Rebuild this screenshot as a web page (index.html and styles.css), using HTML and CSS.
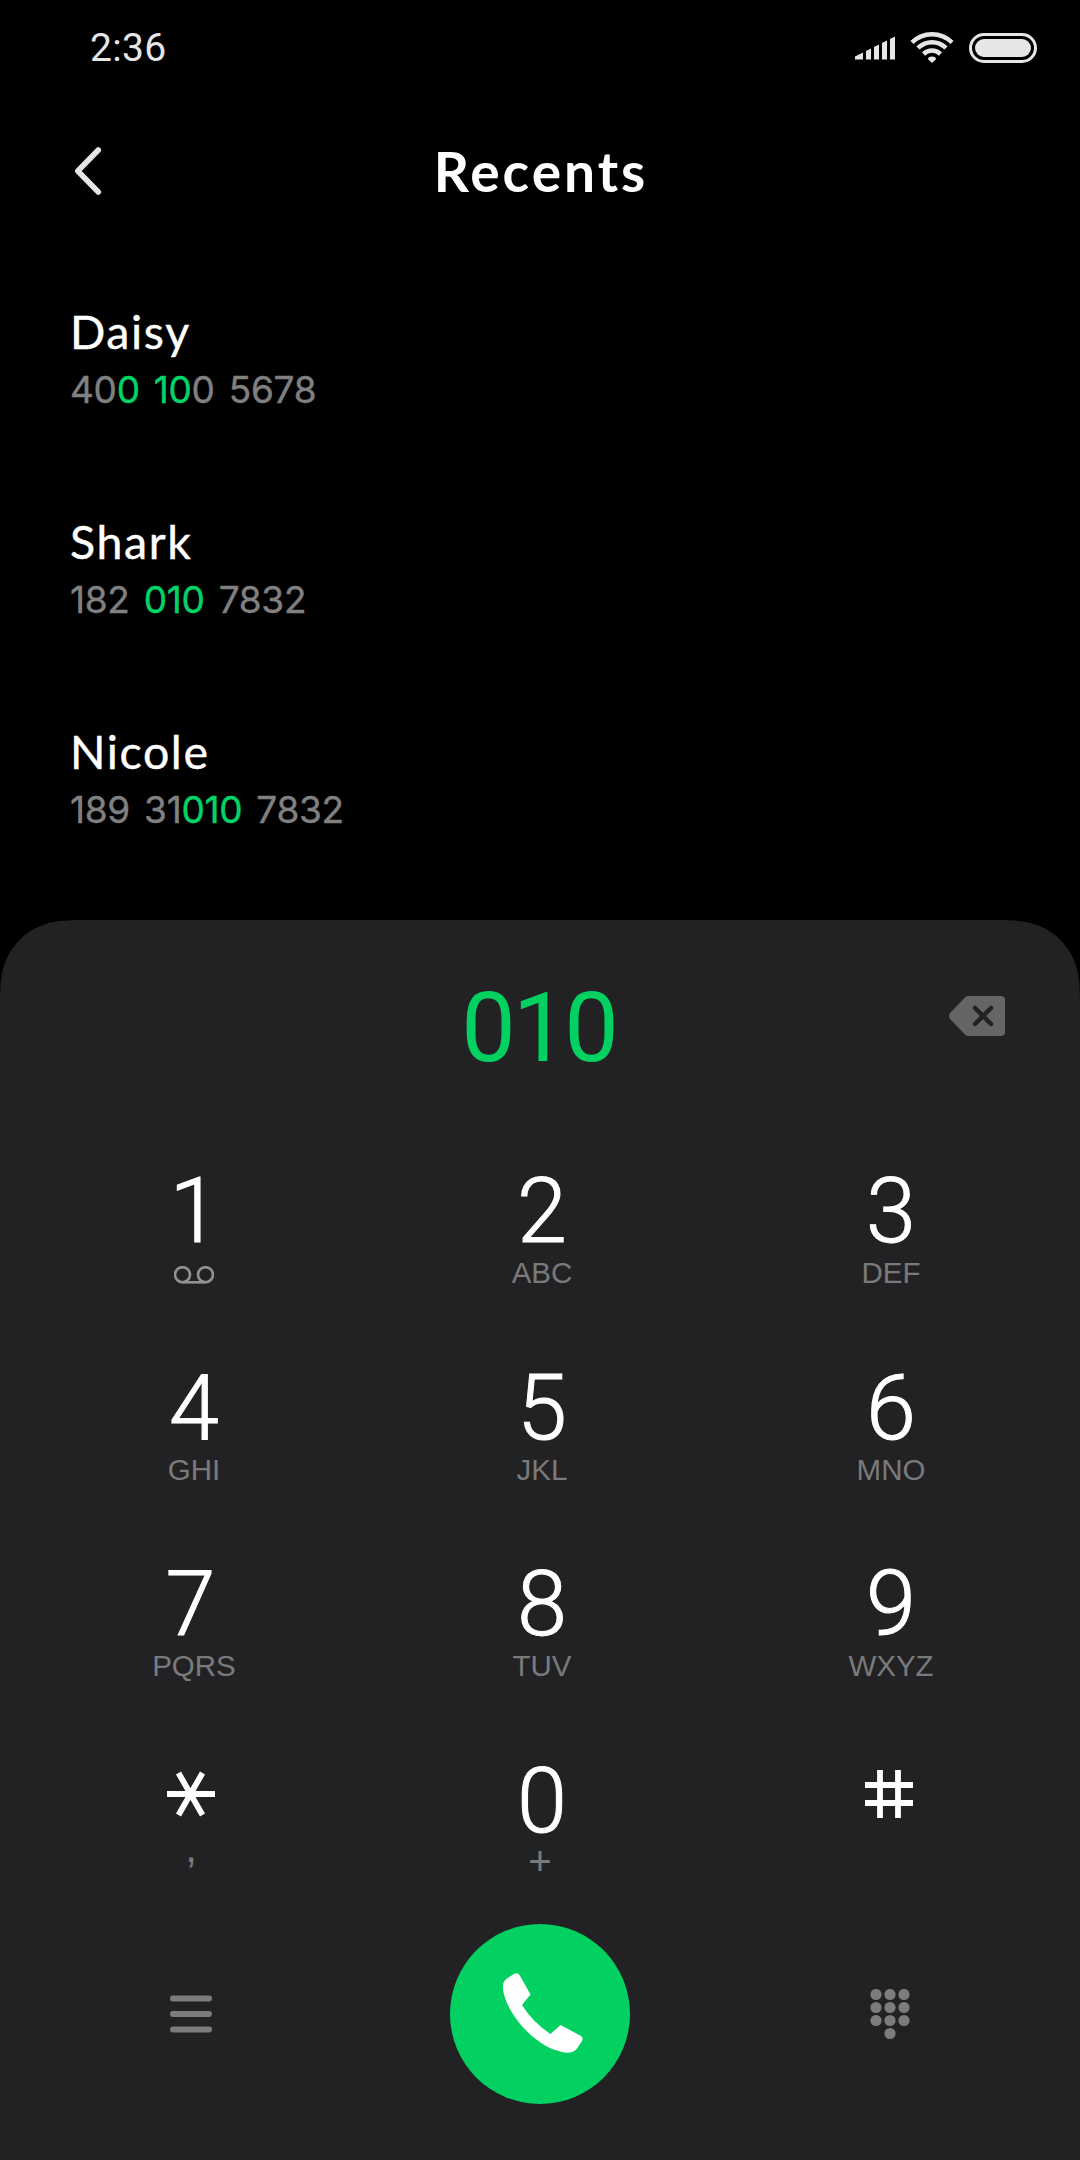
FILE: index.html
```html
<!DOCTYPE html>
<html lang="en">
<head>
<meta charset="utf-8">
<title>Recents</title>
<link rel="stylesheet" href="styles.css">
</head>
<body>
<main class="phone">
  <div class="status">
    <span class="clock">2:36</span>
    <div class="indicators">
      <svg class="signal" width="41" height="24" viewBox="0 0 41 24"><path d="M0 23.5V20.5L8 16.5V23.5ZM11 23.5V15L16 12.5V23.5ZM19 23.5V11L24 8.5V23.5ZM27 23.5V7L32 4.5V23.5ZM35 23.5V3L40 .5V23.5Z"/></svg>
      <svg class="wifi" width="44" height="32" viewBox="0 0 44 32"><path class="arc" d="M2 10.5C13-.5 31-.5 42 10.5M8 16C16 8.200 28 8.200 36 16M13.500 22C18.500 17.300 25.500 17.300 30.500 22"/><path d="M22 31L18 27.200Q18 24.500 22 24.500T26 27.200Z"/></svg>
      <span class="battery"><span class="charge"></span></span>
    </div>
  </div>

  <header class="header">
    <svg class="back" width="28" height="50" viewBox="0 0 28 50"><path d="M24.300 4L3.800 25L24.300 46"/></svg>
    <h1 class="title">Recents</h1>
  </header>

  <section class="recents">
    <article class="contact">
      <h2 class="name">Daisy</h2>
      <p class="number">40<b>0 10</b>0 5678</p>
    </article>
    <article class="contact">
      <h2 class="name">Shark</h2>
      <p class="number">182 <b>010</b> 7832</p>
    </article>
    <article class="contact">
      <h2 class="name">Nicole</h2>
      <p class="number">189 31<b>010</b> 7832</p>
    </article>
  </section>

  <section class="dialer">
    <div class="entry">
      <span class="typed">010</span>
      <svg class="erase" width="56" height="40" viewBox="0 0 56 40"><path class="tag" d="M19 0H52Q56 0 56 4V36Q56 40 52 40H19Q17 40 15.500 38L1 23Q-1 20 1 17L15.500 2Q17 0 19 0Z"/><path class="cross" d="M26 12L42 28M42 12L26 28"/></svg>
    </div>
    <div class="keys">
      <div class="key"><span class="digit digit-one">1</span><span class="letters"><svg class="voicemail" width="40" height="18" viewBox="0 0 40 18"><circle cx="8.500" cy="8.700" r="7.500"/><circle cx="31.500" cy="8.700" r="7.500"/><path d="M8.500 16.300H31.500"/></svg></span></div>
      <div class="key"><span class="digit">2</span><span class="letters">ABC</span></div>
      <div class="key"><span class="digit">3</span><span class="letters">DEF</span></div>
      <div class="key"><span class="digit">4</span><span class="letters">GHI</span></div>
      <div class="key"><span class="digit">5</span><span class="letters">JKL</span></div>
      <div class="key"><span class="digit">6</span><span class="letters">MNO</span></div>
      <div class="key"><span class="digit digit-seven">7</span><span class="letters">PQRS</span></div>
      <div class="key"><span class="digit">8</span><span class="letters">TUV</span></div>
      <div class="key"><span class="digit">9</span><span class="letters">WXYZ</span></div>
      <div class="key key-star"><span class="digit"><svg class="symbol" width="48" height="48" viewBox="0 0 48 48"><path d="M0 24H48M11.500 3L35.500 45M35.500 3L11.500 45"/></svg></span><span class="letters comma">,</span></div>
      <div class="key"><span class="digit">0</span><span class="letters plus">+</span></div>
      <div class="key key-hash"><span class="digit"><svg class="symbol" width="48" height="48" viewBox="0 0 48 48"><path d="M15 0V48M33 0V48M0 15H48M0 33H48"/></svg></span></div>
    </div>
    <div class="actions">
      <svg class="menu" width="44" height="38" viewBox="0 0 44 38"><path d="M4 3.500H40M4 19H40M4 34.500H40"/></svg>
      <span class="call"><svg width="80" height="80" viewBox="0 0 80 80"><path d="M10.500 1.200Q14.500-1 16.500 2L27.500 21.500 19 32Q29 48.500 47.500 61L57.500 52 78 63Q80.500 64.500 79 68L74 75.500Q70.500 80.500 62 79.500C34 76 4 42 0 17Q-.8 9 3 6.200Z"/></svg></span>
      <svg class="dialpad" width="40" height="50" viewBox="0 0 40 50"><circle cx="6" cy="5.500" r="5.600"/><circle cx="20" cy="5.500" r="5.600"/><circle cx="34" cy="5.500" r="5.600"/><circle cx="6" cy="18.500" r="5.600"/><circle cx="20" cy="18.500" r="5.600"/><circle cx="34" cy="18.500" r="5.600"/><circle cx="6" cy="31.500" r="5.600"/><circle cx="20" cy="31.500" r="5.600"/><circle cx="34" cy="31.500" r="5.600"/><circle cx="20" cy="44.500" r="5.600"/></svg>
    </div>
  </section>
</main>
</body>
</html>
```
FILE: styles.css
```css
* { box-sizing: border-box; }
body { margin: 0; background: #000; }
h1, h2, p { margin: 0; font-weight: 400; }
svg { display: block; }

.phone {
  width: 1080px;
  height: 2160px;
  display: flex;
  flex-direction: column;
  background: #000;
  color: #fff;
  font-family: Roboto, sans-serif;
  overflow: hidden;
}

.status {
  height: 95px;
  padding: 0 43px 0 90px;
  display: flex;
  align-items: center;
  justify-content: space-between;
  color: #e6e6e6;
  fill: #e6e6e6;
}
.clock { padding-top: 1px; font-size: 39px; line-height: 95px; letter-spacing: 0.3px; }
.indicators { display: flex; align-items: center; }
.signal { margin-right: 14px; }
.wifi { margin-right: 15px; }
.wifi .arc { fill: none; stroke: #e6e6e6; stroke-width: 4.5; }
.battery {
  width: 68px;
  height: 30px;
  padding: 3px;
  border: 3px solid #e6e6e6;
  border-radius: 15px;
}
.charge { display: block; height: 18px; border-radius: 9px; background: #e6e6e6; }

.header {
  height: 150px;
  padding: 2px 74px 0;
  display: grid;
  grid-template-columns: 28px 1fr 28px;
  align-items: center;
}
.back { fill: none; stroke: #e6e6e6; stroke-width: 5.5; stroke-linecap: round; stroke-linejoin: round; }
.title {
  padding-left: 2px;
  text-align: center;
  font: 700 55px/148px Lato, sans-serif;
  letter-spacing: 3px;
}

.recents {
  height: 675px;
  padding: 58px 70px 0;
  display: flex;
  flex-direction: column;
  gap: 91px;
}
.name { font: 400 46.5px/56px Lato, sans-serif; letter-spacing: 1.6px; -webkit-text-stroke: 0.4px; }
.number {
  margin-top: -1px;
  font: 400 37px/64px Inter, sans-serif;
  letter-spacing: -0.3px;
  word-spacing: 4px;
  color: #808080;
  -webkit-text-stroke: 0.4px;
}
.number b { font-weight: inherit; color: #02d467; }

.dialer {
  height: 1240px;
  background: #222224;
  clip-path: path("M0 85C0 58 2 48 8 36C14 24 24 14 36 8C48 2 58 0 85 0H995C1022 0 1032 2 1044 8C1056 14 1066 24 1072 36C1078 48 1080 58 1080 85V1240H0Z");
}
.entry {
  height: 216px;
  padding: 0 75px;
  display: grid;
  grid-template-columns: 56px 1fr 56px;
  align-items: center;
}
.typed {
  grid-column: 2;
  padding-right: 3px;
  text-align: center;
  font-size: 97px;
  line-height: 216px;
  letter-spacing: -3px;
  color: #02d162;
}
.erase { margin-bottom: 24px; }
.erase .tag { fill: #656567; }
.erase .cross { stroke: #222224; stroke-width: 4.5; stroke-linecap: round; }

.keys {
  padding: 33px 15px 0 20px;
  display: grid;
  grid-template-columns: repeat(3, 348px);
  grid-auto-rows: 122px;
  row-gap: 74.5px;
}
.key { display: flex; flex-direction: column; align-items: center; }
.key:nth-child(3n) { padding-left: 2px; }
.digit {
  height: 86px;
  font-size: 90px;
  font-weight: 300;
  line-height: 86px;
  -webkit-text-stroke: 1px;
}
.digit-one { padding-left: 1px; }
.digit-seven { padding-right: 7px; }
.letters { height: 36px; font: 400 29.5px/36px "Liberation Sans", sans-serif; color: #7a7a7c; }
.voicemail { margin-top: 11px; fill: none; stroke: #929292; stroke-width: 2.6; }
.symbol { margin-top: 11px; fill: none; stroke: #fff; stroke-width: 5.8; }
.key.key-star { padding-right: 6px; }
.key.key-hash { padding: 0 2px 0 0; }
.comma { font-size: 42px; line-height: 6px; }
.plus { padding-right: 4px; font-size: 40px; line-height: 32px; }

.actions {
  height: 180px;
  margin-top: 43px;
  padding: 0 170px 0 169px;
  display: flex;
  align-items: center;
  justify-content: space-between;
}
.menu { stroke: #7c7c7e; stroke-width: 6; stroke-linecap: round; }
.dialpad { fill: #7c7c7e; }
.call {
  width: 180px;
  height: 180px;
  margin-right: 3px;
  padding: 49px 0 0 53px;
  border-radius: 50%;
  background: #02d162;
  fill: #fff;
}
```
